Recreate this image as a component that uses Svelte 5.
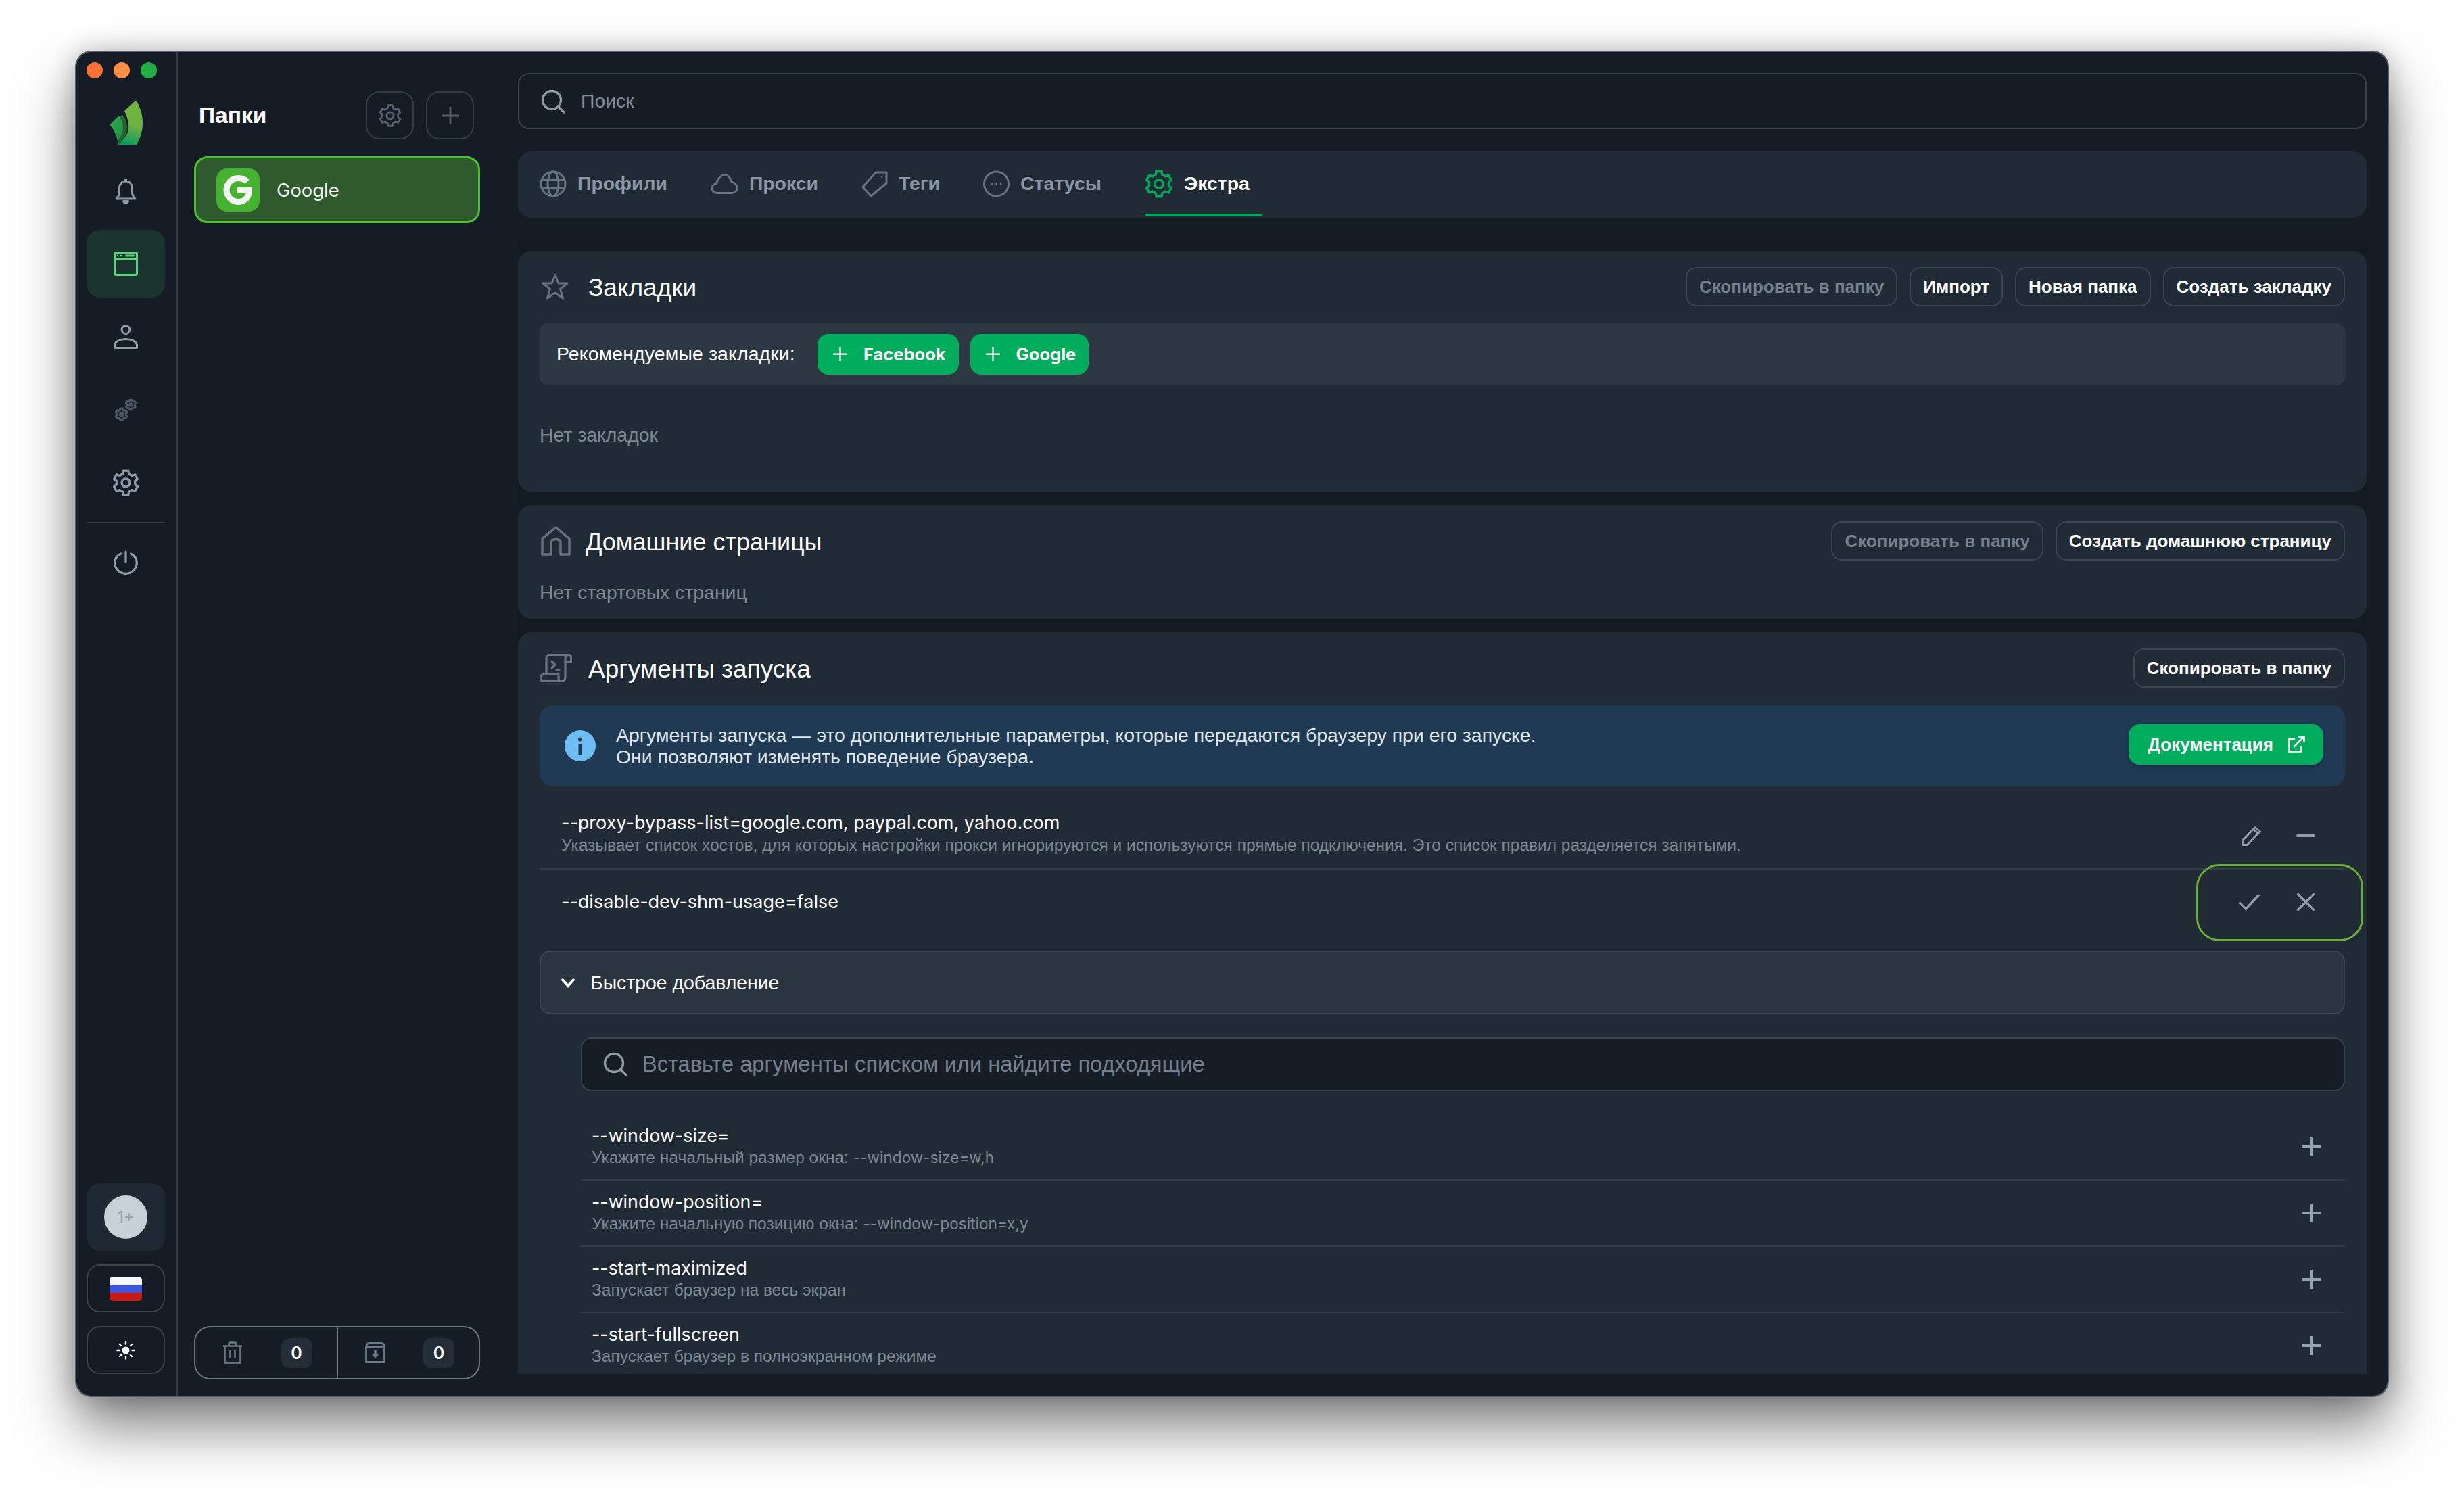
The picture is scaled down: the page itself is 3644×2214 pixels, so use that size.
<script>
  const tabs = [
    { id: 'globe', label: 'Профили' },
    { id: 'cloud', label: 'Прокси' },
    { id: 'tag', label: 'Теги' },
    { id: 'status', label: 'Статусы' },
    { id: 'gear', label: 'Экстра', active: true }
  ];

  const quick = [
    { name: '--window-size=', desc: 'Укажите начальный размер окна: ', code: '--window-size=w,h' },
    { name: '--window-position=', desc: 'Укажите начальную позицию окна: ', code: '--window-position=x,y' },
    { name: '--start-maximized', desc: 'Запускает браузер на весь экран' },
    { name: '--start-fullscreen', desc: 'Запускает браузер в полноэкранном режиме' }
  ];

  // cog outline with six square-ish teeth, in a 24 box
  function cog(r1 = 11, r2 = 8.4) {
    let d = '';
    for (let i = 0; i < 6; i++) {
      const a = i * 60 - 90;
      const pts = [[r2, a - 19], [r1, a - 12], [r1, a + 12], [r2, a + 19]];
      for (const [r, deg] of pts) {
        const t = (deg * Math.PI) / 180;
        const x = (12 + r * Math.cos(t)).toFixed(2);
        const y = (12 + r * Math.sin(t)).toFixed(2);
        d += (d ? 'L' : 'M') + x + ' ' + y;
      }
    }
    return d + 'Z';
  }
  const cogPath = cog();
</script>

{#snippet gearIcon(size, color, sw)}
  <svg width={size} height={size} viewBox="0 0 24 24" fill="none" stroke={color} stroke-width={sw} stroke-linejoin="round">
    <path d={cogPath} />
    <circle cx="12" cy="12" r="3.6" />
  </svg>
{/snippet}

{#snippet plusIcon(size, color, sw)}
  <svg width={size} height={size} viewBox="0 0 28 28" fill="none" stroke={color} stroke-width={sw}>
    <path d="M14 0V28M0 14H28" />
  </svg>
{/snippet}

{#snippet searchIcon()}
  <svg class="search-ico" width="36" height="36" viewBox="0 0 36 36" fill="none" stroke="#8e9aa6" stroke-width="3.4" stroke-linecap="round">
    <circle cx="16" cy="16" r="13.5" />
    <path d="M26 26l8 8" />
  </svg>
{/snippet}

{#snippet tabIcon(id, color)}
  {#if id === 'globe'}
    <svg width="40" height="40" viewBox="0 0 40 40" fill="none" stroke={color} stroke-width="3">
      <circle cx="20" cy="20" r="18" />
      <ellipse cx="20" cy="20" rx="8" ry="18" />
      <path d="M3 13.5H37M3 26.5H37" />
    </svg>
  {:else if id === 'cloud'}
    <svg width="41" height="40" viewBox="0 0 41 40" fill="none" stroke={color} stroke-width="3">
      <path d="M10 33.5C5 33.5 2 30 2 26.5 2 22.500 5 20 8.500 19.500 10 12 15 7 20.500 7 26 7 30 11.500 31 17 36 18 39 22 39 26 39 30.500 36 33.500 31 33.500Z" stroke-linejoin="round" />
    </svg>
  {:else if id === 'tag'}
    <svg width="39" height="40" viewBox="0 0 39 40" fill="none" stroke={color} stroke-width="3" stroke-linejoin="round">
      <path d="M21 3H37V19L14 38 2 24.500Z" />
      <circle cx="30" cy="10" r="1" fill={color} stroke="none" />
    </svg>
  {:else if id === 'status'}
    <svg width="39" height="40" viewBox="0 0 39 40" fill="none" stroke={color} stroke-width="3">
      <circle cx="19.500" cy="20" r="18" />
      <circle cx="13" cy="20" r="1.300" fill={color} stroke="none" />
      <circle cx="19.500" cy="20" r="1.300" fill={color} stroke="none" />
      <circle cx="26" cy="20" r="1.300" fill={color} stroke="none" />
    </svg>
  {:else}
    {@render gearIcon(42, color, 2)}
  {/if}
{/snippet}

<div class="page">
  <div class="window">
    <!-- left rail -->
    <nav class="rail">
      <div class="lights">
        <span class="light red"></span>
        <span class="light orange"></span>
        <span class="light green"></span>
      </div>

      <svg class="logo" width="54" height="68" viewBox="10 8 54 68">
        <defs>
          <linearGradient id="leafA" x1="0.55" y1="0" x2="0.4" y2="1">
            <stop offset="0" stop-color="#72b641" />
            <stop offset="0.55" stop-color="#6cb141" />
            <stop offset="1" stop-color="#0b9b5c" />
          </linearGradient>
          <linearGradient id="leafB" x1="0" y1="0.2" x2="1" y2="0.9">
            <stop offset="0" stop-color="#2ca848" />
            <stop offset="1" stop-color="#1b8a47" />
          </linearGradient>
        </defs>
        <path fill="url(#leafA)" d="M35 24L49 11Q52 8.500 54 11.500C59 20 62 30 62 42 62 54 58 66 53 74H27C31 66 40 62 41 50 42 40 38 30 35 24Z" />
        <path fill="url(#leafB)" d="M13 44.500L26 32Q28 30.500 30 31.500L35 33C38 40 39 46 38.500 52 37.500 61 31 66 27 74H25.500C25 64 21 53 13 44.500Z" />
        <path fill="#2c5f34" d="M28 32L35 33C38 40 40 46 39 52 38 61 31 67 27 74 26.500 71 26 69 25.500 67 29 62 33 58 33 50 33 43 31 37 28 32Z" />
      </svg>

      <div class="nav-item">
        <svg width="32" height="40" viewBox="0 0 32 40" fill="none" stroke="#8e9aa7" stroke-width="3" stroke-linejoin="round">
          <path d="M2 32C5 29 6.500 27 6.500 22V16C6.500 10 11 6 16 6 21 6 25.500 10 25.500 16V22C25.500 27 27 29 30 32Z" />
          <circle cx="16" cy="4" r="2.200" fill="#8e9aa7" stroke="none" />
          <path d="M12.500 35.500C13 38.500 19 38.500 19.500 35.500Z" fill="#8e9aa7" />
        </svg>
      </div>
      <div class="nav-item active">
        <svg width="36" height="36" viewBox="0 0 36 36" fill="none" stroke="#5fd284" stroke-width="3">
          <rect x="1.500" y="1.500" width="33" height="33" rx="2.500" />
          <path d="M1.500 10.500H34.500" />
          <circle cx="6" cy="6" r="1.300" fill="#5fd284" stroke="none" />
          <circle cx="11" cy="6" r="1.300" fill="#5fd284" stroke="none" />
          <rect x="17" y="4.500" width="14" height="3" rx="1.500" fill="#5fd284" stroke="none" />
        </svg>
      </div>
      <div class="nav-item">
        <svg width="36" height="36" viewBox="0 0 36 36" fill="none" stroke="#8e9aa7" stroke-width="3">
          <circle cx="18" cy="7.500" r="6" />
          <path d="M1.500 34.500V31C1.500 25 10 21.500 18 21.500 26 21.500 34.500 25 34.500 31V34.500Z" stroke-linejoin="round" />
        </svg>
      </div>
      <div class="nav-item">
        <svg width="32" height="33" viewBox="0 0 32 33" fill="none" stroke="#4e5965" stroke-linejoin="round">
          <g transform="translate(0 13) scale(0.8)" stroke-width="3.6">
            <path d={cogPath} />
            <circle cx="12" cy="12" r="3" />
          </g>
          <g transform="translate(15 0) scale(0.7)" stroke-width="4">
            <path d={cogPath} />
            <circle cx="12" cy="12" r="2.600" />
          </g>
        </svg>
      </div>
      <div class="nav-item">{@render gearIcon(40, '#8e9aa7', 2)}</div>
      <div class="rail-line"></div>
      <div class="nav-item">
        <svg width="36" height="36" viewBox="0 0 36 36" fill="none" stroke="#8e9aa7" stroke-width="3.200" stroke-linecap="round">
          <path d="M10.500 5C5 7.800 1.700 12.700 1.700 18.300 1.700 27 9 34.300 18 34.300 27 34.300 34.300 27 34.300 18.300 34.300 12.700 31 7.800 25.500 5" />
          <path d="M18 2V17" />
        </svg>
      </div>

      <div class="rail-bottom">
        <div class="avatar-card"><span class="avatar lat">1+</span></div>
        <div class="rail-btn">
          <span class="flag"><i class="f1"></i><i class="f2"></i><i class="f3"></i></span>
        </div>
        <div class="rail-btn">
          <svg width="28" height="28" viewBox="0 0 28 28" stroke="#fff" stroke-width="2.400" stroke-linecap="round" fill="#fff">
            <circle cx="14" cy="14" r="5.500" stroke="none" />
            <path d="M14 1.500V4.500M14 23.500V26.500M1.500 14H4.500M23.500 14H26.500M5 5L7 7M21 21L23 23M5 23L7 21M21 7L23 5" />
          </svg>
        </div>
      </div>
    </nav>

    <!-- folders -->
    <aside class="folders">
      <div class="folders-head">
        <h2>Папки</h2>
        <div class="head-btns">
          <div class="square-btn">{@render gearIcon(34, '#56616d', 2)}</div>
          <div class="square-btn">{@render plusIcon(26, '#56616d', 3)}</div>
        </div>
      </div>

      <div class="folder">
        <span class="folder-ico">
          <svg width="44" height="44" viewBox="0 0 44 44" fill="none" stroke="#f3f6f3" stroke-width="9">
            <path d="M35.500 9.500C32 6.200 27.500 4.500 22.500 4.500 12.700 4.500 5 12.300 5 22 5 31.700 12.700 39.500 22.500 39.500 32 39.500 38.500 32.500 38.500 22.500H21" />
          </svg>
        </span>
        <span class="lat folder-name">Google</span>
      </div>

      <div class="counters">
        <div class="counter">
          <svg width="30" height="33" viewBox="0 0 30 33" fill="none" stroke="#6d7885" stroke-width="2.600">
            <path d="M1 6.500H29M9.500 6V3.500C9.500 2 10.500 1.500 12 1.500H18C19.500 1.500 20.500 2 20.500 3.500V6M3.500 6.500V31.500H26.500V6.500M11.500 13V25M18.500 13V25" />
          </svg>
          <span class="badge lat">0</span>
        </div>
        <div class="counter with-line">
          <svg width="30" height="31" viewBox="0 0 30 31" fill="none" stroke="#6d7885" stroke-width="2.800">
            <path d="M1.500 8V29.500H28.500V8C28.500 4 27 1.500 24 1.500H6C3 1.500 1.500 4 1.500 8ZM1.500 7.500H28.500" />
            <path d="M15 12V21" stroke-width="3.400" />
            <path d="M9.500 17.500H20.500L15 24Z" fill="#6d7885" stroke="none" />
          </svg>
          <span class="badge lat">0</span>
        </div>
      </div>
    </aside>

    <!-- main column -->
    <main class="main">
      <div class="search">
        {@render searchIcon()}
        <span>Поиск</span>
      </div>

      <div class="tabs">
        {#each tabs as t}
          <div class="tab" class:on={t.active}>
            {@render tabIcon(t.id, t.active ? '#00a85a' : '#677380')}
            <span>{t.label}</span>
          </div>
        {/each}
      </div>

      <div class="scroll">
        <section class="card bookmarks">
          <header class="card-head">
            <svg class="star" width="40" height="40" viewBox="0 0 40 40" fill="none" stroke="#677380" stroke-width="3" stroke-linejoin="round">
              <path d="M20 2.500L25 15H38L27.500 23.500 31.500 37 20 29 8.500 37 12.500 23.500 2 15H15Z" />
            </svg>
            <h3 class="bigger">Закладки</h3>
            <div class="btns">
              <span class="btn off">Скопировать в папку</span>
              <span class="btn">Импорт</span>
              <span class="btn">Новая папка</span>
              <span class="btn">Создать закладку</span>
            </div>
          </header>
          <div class="reco">
            <span class="reco-label">Рекомендуемые закладки:</span>
            <span class="green-btn">{@render plusIcon(21, '#fff', 3)}<b class="lat">Facebook</b></span>
            <span class="green-btn">{@render plusIcon(21, '#fff', 3)}<b class="lat">Google</b></span>
          </div>
          <p class="empty first">Нет закладок</p>
        </section>

        <section class="card homes">
          <header class="card-head">
            <svg class="house" width="44" height="44" viewBox="0 0 44 44" fill="none" stroke="#677380" stroke-width="3.400" stroke-linejoin="round">
              <path d="M2 18.500L22 2 42 18.500V42H29V24C29 21 27 19.500 22 19.500 17 19.500 15 21 15 24V42H2Z" />
            </svg>
            <h3>Домашние страницы</h3>
            <div class="btns">
              <span class="btn off">Скопировать в папку</span>
              <span class="btn">Создать домашнюю страницу</span>
            </div>
          </header>
          <p class="empty">Нет стартовых страниц</p>
        </section>

        <section class="card args">
          <header class="card-head">
            <svg width="48" height="42" viewBox="0 0 48 42" fill="none" stroke="#677380" stroke-width="3.200" stroke-linejoin="round" stroke-linecap="round">
              <path d="M10 30V6C10 3 12 1.500 14.500 1.500H43C45 1.500 46.500 3 46.500 5V12H38V5C38 3 39.500 1.500 43 1.500" />
              <path d="M38 12V34C38 38 36 40.500 32 40.500H6C3 40.500 1.500 38.500 1.500 35.500 1.500 32.500 3 30.500 6 30.500H28V35.500C28 38.500 30 40.500 32 40.500" />
              <path d="M18 11L23 16 18 21M25 24H29" />
            </svg>
            <h3 class="bigger tight">Аргументы запуска</h3>
            <div class="btns">
              <span class="btn">Скопировать в папку</span>
            </div>
          </header>

          <div class="info">
            <svg width="46" height="46" viewBox="0 0 46 46">
              <circle cx="23" cy="23" r="23" fill="#6dbdf3" />
              <circle cx="23" cy="13.500" r="3" fill="#213a54" />
              <path d="M20.500 20H25V36H20.500Z" fill="#213a54" />
            </svg>
            <p>Аргументы запуска — это дополнительные параметры, которые передаются браузеру при его запуске.<br />Они позволяют изменять поведение браузера.</p>
            <span class="docs">
              Документация
              <svg width="26" height="26" viewBox="0 0 26 26" fill="none" stroke="#fff" stroke-width="2.600">
                <path d="M11 5H2.500V23.500H20V15" />
                <path d="M9.500 16.500L24 2M16 1.500H24.500V10" />
              </svg>
            </span>
          </div>

          <div class="arg-row first-arg">
            <div class="arg-text">
              <div class="arg-name lat">--proxy-bypass-list=google.com, paypal.com, yahoo.com</div>
              <div class="arg-desc">Указывает список хостов, для которых настройки прокси игнорируются и используются прямые подключения. Это список правил разделяется запятыми.</div>
            </div>
            <div class="arg-actions">
              <span class="act">
                <svg width="30" height="30" viewBox="0 0 30 30" fill="none" stroke="#929eab" stroke-width="2.800" stroke-linejoin="round">
                  <path d="M1.500 28.500V22L20 2.500 27.500 8.500 8.500 28.500ZM17.500 5.500L24.500 11.500" />
                </svg>
              </span>
              <span class="act"><i class="minus"></i></span>
            </div>
          </div>

          <div class="arg-row second-arg">
            <div class="arg-text"><div class="arg-name lat">--disable-dev-shm-usage=false</div></div>
            <div class="arg-actions">
              <span class="act">
                <svg class="check" width="32" height="26" viewBox="0 0 32 26" fill="none" stroke="#929eab" stroke-width="3.400">
                  <path d="M1.500 13.500L11.500 23.500 31 2" />
                </svg>
              </span>
              <span class="act">
                <svg width="28" height="28" viewBox="0 0 28 28" fill="none" stroke="#929eab" stroke-width="3.400">
                  <path d="M1.500 1.500L26.500 26.500M26.500 1.500L1.500 26.500" />
                </svg>
              </span>
            </div>
            <div class="focus-ring"></div>
          </div>

          <div class="accordion">
            <svg width="22" height="16" viewBox="0 0 22 16" fill="none" stroke="#fff" stroke-width="4">
              <path d="M2 3L11 13 20 3" />
            </svg>
            <span>Быстрое добавление</span>
          </div>

          <div class="quick">
            <div class="quick-search">
              {@render searchIcon()}
              <span>Вставьте аргументы списком или найдите подходящие</span>
            </div>
            {#each quick as q}
              <div class="quick-row">
                <div>
                  <div class="arg-name lat small">{q.name}</div>
                  <div class="arg-desc">{q.desc}{#if q.code}<span class="lat">{q.code}</span>{/if}</div>
                </div>
                <span class="quick-plus">{@render plusIcon(28, '#94a3b3', 4)}</span>
              </div>
            {/each}
          </div>
        </section>
      </div>
    </main>
  </div>
</div>

<style>
  :global(body) {
    margin: 0;
    background: #fff;
  }

  .page {
    width: 3644px;
    height: 2214px;
    padding: 75px 0 0 111px;
    box-sizing: border-box;
    font-family: "Liberation Sans", Arial, sans-serif;
    font-size: 28.4px;
    color: #fff;
    overflow: hidden;
  }

  .lat {
    font-family: Inter, "Liberation Sans", sans-serif;
  }

  .window {
    width: 3422px;
    height: 1991px;
    box-sizing: border-box;
    display: flex;
    border: 2px solid #566069;
    border-radius: 24px;
    background: #151c25;
    overflow: hidden;
    box-shadow: 0 44px 84px rgba(0, 0, 0, 0.5), 0 0 36px rgba(0, 0, 0, 0.22);
  }

  /* rail */
  .rail {
    width: 150px;
    flex: none;
    box-sizing: border-box;
    border-right: 2px solid #343d48;
    padding: 15px 17px 32px 15px;
    display: flex;
    flex-direction: column;
  }

  .lights {
    display: flex;
    gap: 16px;
  }

  .light {
    width: 24px;
    height: 24px;
    border-radius: 50%;
  }

  .red { background: #fb7136; }
  .orange { background: #fd8f45; }
  .green { background: #23ad43; }

  .logo {
    margin: 32px 0 16px 31px;
    display: block;
  }

  .nav-item {
    height: 100px;
    margin-bottom: 8px;
    border-radius: 20px;
    display: flex;
    align-items: center;
    justify-content: center;
  }

  .nav-item.active {
    background: #1b352e;
  }

  .rail-line {
    height: 2px;
    margin: 0 0 8px;
    background: #343d48;
  }

  .rail-bottom {
    margin-top: auto;
    display: flex;
    flex-direction: column;
    gap: 20px;
  }

  .avatar-card {
    height: 100px;
    border-radius: 20px;
    background: #1f2933;
    display: flex;
    align-items: center;
    justify-content: center;
  }

  .avatar {
    width: 64px;
    height: 64px;
    border-radius: 50%;
    background: #c6d2d7;
    color: #94a3ad;
    font-size: 24px;
    display: flex;
    align-items: center;
    justify-content: center;
  }

  .rail-btn {
    height: 71px;
    box-sizing: border-box;
    border: 2px solid #39424d;
    border-radius: 20px;
    display: flex;
    align-items: center;
    justify-content: center;
  }

  .flag {
    width: 48px;
    height: 36px;
    border-radius: 5px;
    overflow: hidden;
    display: flex;
    flex-direction: column;
  }

  .flag i { flex: 1; }
  .f1 { background: #f6f9fb; }
  .f2 { background: #3e56dd; }
  .f3 { background: #c41a18; }

  /* folders */
  .folders {
    width: 503px;
    flex: none;
    box-sizing: border-box;
    padding: 58px 56px 24px 24px;
    display: flex;
    flex-direction: column;
  }

  .folders-head {
    display: flex;
    align-items: center;
    justify-content: space-between;
    padding: 0 9px 0 7px;
  }

  h2 {
    margin: 0;
    font-size: 33.5px;
    font-weight: 700;
  }

  .head-btns {
    display: flex;
    gap: 18px;
  }

  .square-btn {
    width: 71px;
    height: 71px;
    box-sizing: border-box;
    border: 2px solid #333d48;
    border-radius: 20px;
    display: flex;
    align-items: center;
    justify-content: center;
  }

  .folder {
    margin-top: 25px;
    height: 99px;
    box-sizing: border-box;
    border: 3px solid #4cc02e;
    border-radius: 20px;
    background: #2e5a2d;
    padding-left: 30px;
    display: flex;
    align-items: center;
    gap: 25px;
  }

  .folder-ico {
    width: 64px;
    height: 64px;
    border-radius: 16px;
    background: #45b330;
    display: flex;
    align-items: center;
    justify-content: center;
  }

  .folder-name {
    font-size: 27.4px;
    color: #f1f5f1;
  }

  .counters {
    margin-top: auto;
    height: 79px;
    box-sizing: border-box;
    border: 2px solid #6d7885;
    border-radius: 24px;
    display: flex;
  }

  .counter {
    flex: 1;
    box-sizing: border-box;
    display: flex;
    align-items: center;
    justify-content: space-between;
    padding: 0 36px 0 40px;
  }

  .counter.with-line {
    border-left: 2px solid #6d7885;
  }

  .badge {
    width: 46px;
    height: 44px;
    border-radius: 12px;
    background: #242e38;
    display: flex;
    align-items: center;
    justify-content: center;
    font-size: 25px;
    font-weight: 600;
  }

  /* main */
  .main {
    flex: 1;
    min-width: 0;
    box-sizing: border-box;
    padding: 31px 31px 32px 0;
    display: flex;
    flex-direction: column;
  }

  .search {
    height: 83px;
    flex: none;
    box-sizing: border-box;
    border: 2px solid #3a444f;
    border-radius: 16px;
    padding-left: 32px;
    display: flex;
    align-items: center;
    gap: 23px;
    color: #7f8b97;
  }

  .search-ico { flex: none; }

  .tabs {
    margin-top: 33px;
    height: 98px;
    flex: none;
    box-sizing: border-box;
    border-radius: 20px;
    background: #212b36;
    padding-left: 32px;
    display: flex;
    gap: 46px;
  }

  .tab {
    height: 96px;
    box-sizing: border-box;
    padding: 3px 18px 0 0;
    border-bottom: 4px solid transparent;
    display: flex;
    align-items: center;
    gap: 16px;
    font-weight: 700;
    color: #8a96a3;
  }

  .tab.on {
    color: #fff;
    border-bottom-color: #00a85a;
  }

  .scroll {
    margin-top: 31px;
    padding-top: 18px;
    flex: 1;
    min-height: 0;
    display: flex;
    flex-direction: column;
    background: #131a22;
  }

  .card {
    flex: none;
    box-sizing: border-box;
    background: #212b36;
    border-radius: 20px;
    padding: 24px 32px 0;
  }

  .bookmarks {
    height: 356px;
  }

  .homes {
    margin-top: 20px;
    height: 168px;
  }

  .args {
    margin-top: 20px;
    flex: 1;
    min-height: 0;
    overflow: hidden;
    border-radius: 20px 20px 0 0;
  }

  .card-head {
    display: flex;
    align-items: center;
    gap: 24px;
    height: 58px;
  }

  .card-head svg { flex: none; }

  .star { margin: 0 5px 0 3px; }

  .house { margin: 0 -2px 0 2px; }

  h3 {
    margin: 4px 0 0;
    font-size: 36px;
    font-weight: 400;
  }

  h3.bigger { font-size: 37px; }

  h3.tight { margin-left: 0; }

  .btns {
    margin-left: auto;
    display: flex;
    gap: 18px;
  }

  .btn {
    height: 58px;
    box-sizing: border-box;
    border: 2px solid #3c4652;
    border-radius: 16px;
    padding: 0 18px;
    display: flex;
    align-items: center;
    font-size: 26px;
    font-weight: 700;
  }

  .btn.off { color: #75818e; }

  .reco {
    margin-top: 25px;
    height: 91px;
    border-radius: 12px;
    background: #2e3843;
    padding-left: 25px;
    display: flex;
    align-items: center;
  }

  .reco-label {
    margin-right: 33px;
    letter-spacing: 0.15px;
  }

  .green-btn {
    height: 60px;
    box-sizing: border-box;
    border-radius: 16px;
    background: #00ad5c;
    padding: 0 19px 0 23px;
    margin-right: 17px;
    display: flex;
    align-items: center;
    gap: 24px;
  }

  .green-btn b {
    font-size: 25.5px;
    font-weight: 700;
  }

  .empty {
    margin: 31px 0 0;
    line-height: 32px;
    color: #7c8894;
  }

  .empty.first { margin-top: 58px; }

  .info {
    margin-top: 26px;
    height: 120px;
    box-sizing: border-box;
    border-radius: 20px;
    background: #213a54;
    padding: 0 32px 0 37px;
    display: flex;
    align-items: center;
    gap: 30px;
  }

  .info svg { flex: none; }

  .info p {
    margin: 0;
    line-height: 32px;
    color: #dfe6ec;
  }

  .docs {
    margin-left: auto;
    margin-bottom: 4px;
    height: 60px;
    box-sizing: border-box;
    border-radius: 16px;
    background: #00ad5c;
    box-shadow: 0 3px 6px rgba(0, 0, 0, 0.25);
    padding: 0 27px 0 28px;
    display: flex;
    align-items: center;
    gap: 21px;
    font-size: 26px;
    font-weight: 700;
  }

  .arg-row {
    position: relative;
    display: flex;
    align-items: center;
    justify-content: space-between;
    padding-left: 32px;
  }

  .first-arg {
    box-sizing: border-box;
    height: 123px;
    padding-top: 37px;
    padding-bottom: 19px;
    border-bottom: 2px solid #343e49;
  }

  .first-arg .arg-actions { margin-top: 6px; }

  .second-arg {
    height: 120px;
    box-sizing: border-box;
    padding-bottom: 24px;
  }

  .arg-name {
    font-size: 27px;
    line-height: 32px;
    color: #fff;
  }

  .arg-name.small {
    font-size: 26.8px;
    margin-top: -2px;
  }

  .arg-desc {
    font-size: 24.5px;
    line-height: 30px;
    margin-top: 2px;
    color: #7c8894;
  }

  .arg-desc .lat {
    font-size: 22.6px;
  }

  .arg-actions {
    display: flex;
    gap: 30px;
    padding-right: 33px;
  }

  .act {
    width: 50px;
    height: 30px;
    display: flex;
    align-items: center;
    justify-content: center;
  }

  .check { margin-right: 8px; }

  .minus {
    width: 28px;
    height: 4px;
    border-radius: 2px;
    background: #929eab;
  }

  .focus-ring {
    position: absolute;
    top: -8px;
    right: -27px;
    width: 247px;
    height: 114px;
    box-sizing: border-box;
    border: 3px solid #6bae34;
    border-radius: 34px;
  }

  .accordion {
    height: 94px;
    box-sizing: border-box;
    border: 2px solid #3c4652;
    border-radius: 16px;
    background: #2b3540;
    padding-left: 29px;
    display: flex;
    align-items: center;
    gap: 22px;
  }

  .quick {
    margin-left: 61px;
  }

  .quick-search {
    margin: 34px 0;
    height: 80px;
    box-sizing: border-box;
    border: 2px solid #3a444f;
    border-radius: 16px;
    background: #161d26;
    padding-left: 31px;
    display: flex;
    align-items: center;
    gap: 22px;
    font-size: 32.6px;
    color: #74808c;
  }

  .quick-row {
    height: 98px;
    box-sizing: border-box;
    border-bottom: 2px solid #343e49;
    padding: 0 36px 0 16px;
    display: flex;
    align-items: center;
    justify-content: space-between;
  }

  .quick-plus {
    display: flex;
  }
</style>
